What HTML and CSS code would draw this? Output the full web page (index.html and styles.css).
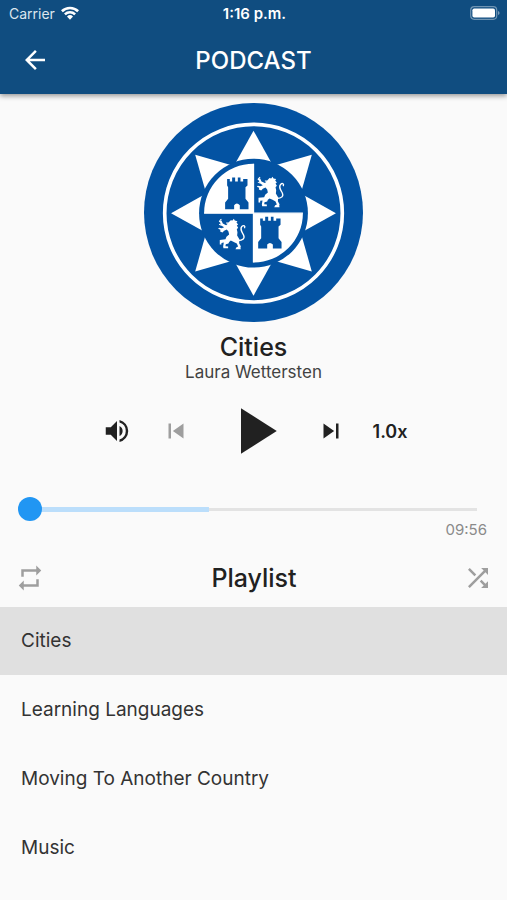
FILE: index.html
```html
<!DOCTYPE html>
<html lang="en">
<head>
    <meta charset="UTF-8">
    <meta name="viewport" content="width=device-width, initial-scale=1.0">
    <title>Podcast</title>
    <link rel="stylesheet" href="styles.css">
</head>
<body>
    <header class="header">
        <div class="status">
            <div class="status-left">
                <span>Carrier</span>
                <svg class="wifi" viewBox="0 0 18 14">
                    <path d="M0 4.3a13 13 0 0 1 18 0l-1.8 1.9a10.4 10.4 0 0 0-14.4 0z"/>
                    <path d="M3 7.4a8.7 8.7 0 0 1 12 0l-1.8 1.9a6.1 6.1 0 0 0-8.4 0z"/>
                    <path d="M6 10.5a4.4 4.4 0 0 1 6 0l-3 3.2z"/>
                </svg>
            </div>
            <span class="status-time">1:16 p.m.</span>
            <svg class="battery" viewBox="0 0 30 14">
                <rect x="0.7" y="0.7" width="26" height="12.6" rx="3.5" fill="none" stroke="#fff" stroke-opacity=".4" stroke-width="1.2"/>
                <rect x="2.4" y="2.4" width="22.6" height="9.2" rx="1.8" fill="#fff"/>
                <path d="M28 5v4q1.600-.6 1.600-2t-1.600-2z" fill="#fff" fill-opacity=".45"/>
            </svg>
        </div>
        <div class="bar">
            <button type="button" class="btn" aria-label="Back">
                <svg class="icon" viewBox="0 0 24 24"><path d="M20 11H7.830l5.590-5.590L12 4l-8 8 8 8 1.410-1.410L7.830 13H20z"/></svg>
            </button>
            <h1 class="bar-title">PODCAST</h1>
        </div>
    </header>

    <main>
        <section class="cover">
            <svg class="logo" viewBox="13 15 656 656" role="img" aria-label="Podcast cover">
                <defs>
                    <path id="ray" d="M341 98L283 202H399z"/>
                    <path id="castle" d="M97 87h8v7h7v-12h9v12h8v-12h8v12h8v-7h13v19l-6 5v35l9 11v20h-26v-12q-9-10-17 0v12H91v-20l9-11v-35l-3-5z"/>
                    <g id="lion">
                        <path d="M217 91l7-7 5 1 4-5 3 5 8 2-3 4 5 6-4 3 4 7-4 4 2 9-1 10 7 12-1 11 5 9-1 5 1 4h-16l3-6 5-2-4-9-9-5-9-4-5 4-2 5-8 2-1 6 8 1v5h-14l-1-5 2-12-7 1v5h-5v-14l17-2 3-7 8-7-2-9-5-6-8 4-5 5-7-3 1-5-7-3 3-3 8 1 7-3-10-6-2-8-4-3 2-4 6 1 4 9 10 5 5-4-5-1v-3z"/>
                        <path d="M245 145c16 0 22-7 17-17-6-11-11-18-5-25 6-6 11-1 8 5" fill="none" stroke="#fff" stroke-width="4"/>
                        <path d="M192 84l4-3m-7 15l7 3" stroke="#fff" stroke-width="3"/>
                    </g>
                </defs>
                <circle cx="341" cy="343" r="328" fill="#0353a3"/>
                <circle cx="341" cy="345" r="266" fill="none" stroke="#fff" stroke-width="11"/>
                <g fill="#fff">
                    <use href="#ray"/>
                    <use href="#ray" transform="rotate(45 341 345)"/>
                    <use href="#ray" transform="rotate(90 341 345)"/>
                    <use href="#ray" transform="rotate(135 341 345)"/>
                    <use href="#ray" transform="rotate(180 341 345)"/>
                    <use href="#ray" transform="rotate(225 341 345)"/>
                    <use href="#ray" transform="rotate(270 341 345)"/>
                    <use href="#ray" transform="rotate(315 341 345)"/>
                </g>
                <circle cx="341" cy="345" r="163" fill="#0353a3"/>
                <path d="M341 345H193a148 148 0 0 1 148-148zM341 345h148a148 148 0 0 1-148 148z" fill="#fff"/>
                <path d="M341 197v296M193 345h296" stroke="#fff" stroke-width="4"/>
                <g fill="#0353a3">
                    <use href="#castle" x="165" y="156"/>
                    <use href="#castle" x="264" y="274"/>
                </g>
                <g fill="#fff">
                    <use href="#lion" x="165" y="156"/>
                    <use href="#lion" x="49" y="282"/>
                </g>
            </svg>
            <h2 class="title">Cities</h2>
            <p class="author">Laura Wettersten</p>
        </section>

        <div class="controls">
            <button type="button" class="btn" aria-label="Volume">
                <svg class="icon" viewBox="0 0 24 24"><path d="M3 9v6h4l5 5V4L7 9zm13.500 3A4.500 4.500 0 0 0 14 7.970v8.050A4.470 4.470 0 0 0 16.500 12zM14 3.230v2.060a7 7 0 0 1 0 13.420v2.060a9 9 0 0 0 0-17.540z"/></svg>
            </button>
            <button type="button" class="btn" aria-label="Previous" disabled>
                <svg class="icon" viewBox="0 0 24 24"><path d="M6 6h2v12H6zm3.500 6l8.500 6V6z"/></svg>
            </button>
            <button type="button" class="btn btn-play" aria-label="Play">
                <svg class="icon icon-play" viewBox="0 0 24 24"><path d="M8 5v14l11-7z"/></svg>
            </button>
            <button type="button" class="btn" aria-label="Next">
                <svg class="icon" viewBox="0 0 24 24"><path d="M6 18l8.500-6L6 6zM16 6v12h2V6z"/></svg>
            </button>
            <button type="button" class="btn btn-speed">1.0x</button>
        </div>

        <div class="seek">
            <input type="range" class="seek-bar" min="0" max="596" value="0" aria-label="Position">
            <span class="seek-time">09:56</span>
        </div>

        <section>
            <div class="playlist-head">
                <button type="button" class="btn btn-off" aria-label="Repeat">
                    <svg class="icon" viewBox="0 0 24 24"><path d="M7 7h10v3l4-4-4-4v3H5v6h2zm10 10H7v-3l-4 4 4 4v-3h12v-6h-2z"/></svg>
                </button>
                <h2 class="title">Playlist</h2>
                <button type="button" class="btn btn-off" aria-label="Shuffle">
                    <svg class="icon" viewBox="0 0 24 24"><path d="M10.590 9.170L5.410 4 4 5.410l5.170 5.170zM14.500 4l2.040 2.040L4 18.590 5.410 20 17.960 7.460 20 9.500V4zm.330 9.410l-1.410 1.410 3.130 3.130L14.500 20H20v-5.500l-2.040 2.040z"/></svg>
                </button>
            </div>
            <ul class="playlist">
                <li class="item item-active">Cities</li>
                <li class="item">Learning Languages</li>
                <li class="item">Moving To Another Country</li>
                <li class="item">Music</li>
            </ul>
        </section>
    </main>
</body>
</html>
```
FILE: styles.css
```css
* {
    box-sizing: border-box;
    margin: 0;
    padding: 0;
}
body {
    min-height: 100vh;
    background-color: #fafafa;
    color: #212121;
    font-family: Inter, "Liberation Sans", sans-serif;
}
/* header */
.header {
    background-color: #104d80;
    box-shadow: 0 2px 5px rgba(0, 0, 0, 0.4);
    color: #fff;
}
.status {
    display: grid;
    grid-template-columns: 1fr auto 1fr;
    align-items: center;
    height: 26px;
    padding: 0 7px 0 9px;
    font-size: 14px;
}
.status-left {
    display: flex;
    align-items: center;
    gap: 6px;
    color: #dce6ee;
}
.status-time {
    font-size: 15px;
    font-weight: 600;
}
.wifi {
    width: 18px;
    height: 14px;
    fill: #fff;
}
.battery {
    width: 30px;
    height: 14px;
    justify-self: end;
}
.bar {
    display: grid;
    grid-template-columns: 70px 1fr 70px;
    align-items: center;
    height: 68px;
}
.bar-title {
    font-size: 24px;
    font-weight: 500;
    text-align: center;
}
/* buttons */
.btn {
    display: flex;
    align-items: center;
    justify-content: center;
    background: none;
    border: none;
    color: inherit;
    font-family: inherit;
    cursor: pointer;
}
.btn:disabled,
.btn-off {
    color: #9e9e9e;
}
.icon {
    width: 30px;
    height: 30px;
    fill: currentColor;
}
/* cover */
.cover {
    display: flex;
    flex-direction: column;
    align-items: center;
    padding-top: 9px;
}
.logo {
    width: 219px;
    height: 219px;
    margin-bottom: 10px;
}
.title {
    font-size: 25px;
    line-height: 30px;
    font-weight: 500;
}
.author {
    color: #424242;
    font-size: 17px;
    line-height: 20px;
}
/* player controls */
.controls {
    display: grid;
    grid-template-columns: 59px 59px 96px 59px 59px;
    justify-content: center;
    height: 98px;
}
.icon-play {
    width: 78px;
    height: 78px;
}
.btn-speed {
    font-size: 18px;
    font-weight: 600;
}
/* seek bar */
.seek {
    display: flex;
    flex-direction: column;
    padding: 17px 18px 0;
}
.seek-bar {
    appearance: none;
    width: 100%;
    height: 24px;
    background:
        linear-gradient(#bbdefb, #bbdefb) 12px 50% / 38% 5px no-repeat,
        linear-gradient(#e3e3e3, #e3e3e3) 50% 50% / calc(100% - 24px) 3px no-repeat;
}
.seek-bar::-webkit-slider-thumb {
    appearance: none;
    width: 24px;
    height: 24px;
    border-radius: 50%;
    background-color: #2196f3;
}
.seek-time {
    align-self: flex-end;
    padding-right: 2px;
    color: #8a8a8a;
    font-size: 15px;
    line-height: 18px;
}
/* playlist */
.playlist-head {
    display: flex;
    align-items: center;
    justify-content: space-between;
    height: 68px;
    padding: 10px 14px 0 15px;
}
.playlist {
    display: flex;
    flex-direction: column;
    gap: 1px;
    list-style: none;
}
.item {
    padding: 20px 21px;
    color: #333;
    font-size: 19px;
    line-height: 28px;
}
.item-active {
    background-color: #e0e0e0;
}
```
